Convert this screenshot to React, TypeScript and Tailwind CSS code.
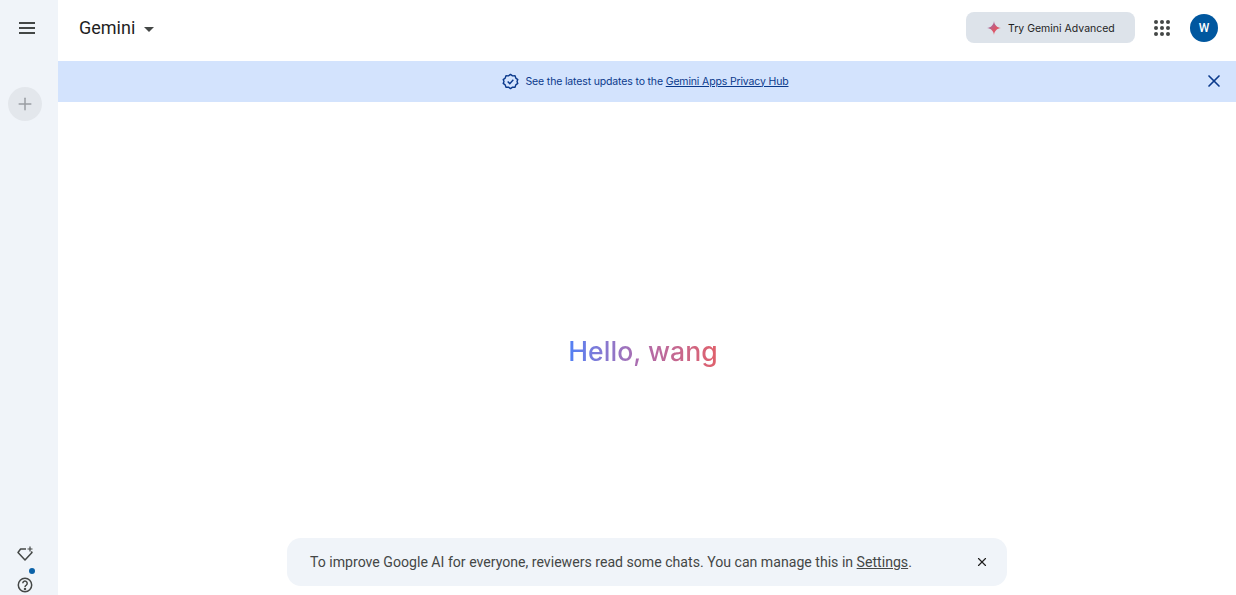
import React from "react";
import { Plus, X } from "lucide-react";

function Dots() {
  const cells = Array.from({ length: 9 });
  return (
    <div className="grid grid-cols-3 gap-[2px] w-[16px]">
      {cells.map((_, i) => (
        <span key={i} className="w-[4px] h-[4px] rounded-full bg-[#444746]" />
      ))}
    </div>
  );
}

export default function App() {
  return (
    <div className="flex w-[1236px] h-[595px] overflow-hidden bg-white font-['Roboto',sans-serif]">
      <aside className="w-[58px] shrink-0 bg-[#f0f4f9] flex flex-col items-center relative">
        <div className="h-[56px] flex items-center justify-center pr-[4px]">
          <svg width="16" height="12" viewBox="0 0 16 12" fill="#444746">
            <rect x="0" y="0" width="16" height="2" />
            <rect x="0" y="5" width="16" height="2" />
            <rect x="0" y="10" width="16" height="2" />
          </svg>
        </div>
        <div className="mt-[31px] mr-[8px] w-[34px] h-[34px] rounded-full bg-[#e3e7ec] flex items-center justify-center text-[#9a9ea3]">
          <Plus size={20} strokeWidth={1.8} />
        </div>
        <div className="mt-auto mb-[2px] mr-[8px] flex flex-col items-center relative">
          <svg width="18" height="18" viewBox="0 0 18 18" fill="none" stroke="#444746" strokeWidth="1.5">
            <path d="M10 4H4.600L2 7.500l7 7.500 7-7.500-.7-1" strokeLinejoin="round" />
            <path d="M14 1.500v5M11.500 4h5" strokeWidth="1.2" />
          </svg>
          <span className="absolute left-[13px] top-[23px] w-[6px] h-[6px] rounded-full bg-[#0b62a8]" />
          <svg width="16" height="16" viewBox="0 0 16 16" fill="none" stroke="#444746" strokeWidth="1.5" className="mt-[14px]">
            <circle cx="8" cy="8" r="6.700" />
            <path d="M5.800 6.300a2.200 2.200 0 1 1 3.500 1.800c-.8.500-1.300 1-1.300 1.900" />
            <circle cx="8" cy="12" r="0.500" fill="#444746" />
          </svg>
        </div>
      </aside>

      <main className="flex-1 flex flex-col relative min-w-0">
        <header className="h-[61px] shrink-0 flex items-center pl-[21px] pr-[18px]">
          <div className="flex items-center gap-[9px] text-[#1f1f1f] pb-[5px]">
            <span className="text-[18px] leading-none">Gemini</span>
            <svg width="10" height="5" viewBox="0 0 10 5" className="mt-[2px]"><path d="M0 0h10L5 5z" fill="#444746" /></svg>
          </div>
          <button className="ml-auto w-[169px] h-[31px] mb-[6px] mr-[-1px] rounded-[8px] bg-[#dde3ea] flex items-center pl-[21px] gap-[7px] text-[#1f1f1f] font-['Inter',sans-serif] text-[10.5px]">
            <svg width="14" height="14" viewBox="0 0 14 14">
              <defs>
                <linearGradient id="s" x1="0" y1="0" x2="1" y2="1">
                  <stop offset="0" stopColor="#7a78c8" />
                  <stop offset="0.55" stopColor="#d9566a" />
                  <stop offset="1" stopColor="#e0616c" />
                </linearGradient>
              </defs>
              <path d="M7 0C7.400 4 10 6.600 14 7 10 7.400 7.400 10 7 14 6.600 10 4 7.400 0 7 4 6.600 6.600 4 7 0Z" fill="url(#s)" />
            </svg>
            <span className="pt-[2px]">Try Gemini Advanced</span>
          </button>
          <div className="ml-[20px] mb-[6px]"><Dots /></div>
          <div className="ml-[20px] mb-[6px] w-[28px] h-[28px] rounded-full bg-[#00579f] text-white text-[12px] font-medium flex items-center justify-center">W</div>
        </header>

        <div className="h-[41px] shrink-0 bg-[#d3e3fd] flex items-center relative text-[#0b3a8c] font-['Inter',sans-serif] text-[10.5px] tracking-[-0.15px]">
          <div className="w-full pr-[4px] flex items-center justify-center gap-[7px]">
            <svg width="17" height="17" viewBox="0 0 24 24" fill="none" stroke="#0b3a8c" strokeWidth="2">
              <path d="M12 2l2.900 2 3.500-.1 1.100 3.300 2.800 2.100L21.200 12l1.100 2.700-2.800 2.100-1.100 3.300-3.500-.1L12 22l-2.900-2-3.500.1-1.100-3.300-2.800-2.100L2.800 12 1.700 9.300l2.800-2.100 1.100-3.300 3.500.1z" strokeLinejoin="round" />
              <path d="M8 12l3 3 5-5.500" />
            </svg>
            <span>See the latest updates to the <span className="underline">Gemini Apps Privacy Hub</span></span>
          </div>
          <X size={20} strokeWidth={2} className="absolute right-[12px] top-[10px] text-[#0b3a8c]" />
        </div>

        <div className="flex-1 flex flex-col items-center relative">
          <h1 className="mt-[230px] mr-[8px] text-[26.600px] leading-[38px] font-medium font-['Inter',sans-serif] bg-gradient-to-r from-[#4f80f5] via-[#b06aaa] to-[#e0606a] bg-clip-text text-transparent">Hello, wang</h1>
          <div className="absolute left-[229px] top-[436px] w-[720px] h-[48px] rounded-[14px] bg-[#f0f4f9] flex items-center pl-[23px] pt-[1px] text-[#444746] text-[14.120px]">
            <span>To improve Google AI for everyone, reviewers read some chats. You can manage this in <span className="underline">Settings</span>.</span>
            <X size={14} strokeWidth={2} className="absolute right-[18px] top-[17px] text-[#1f1f1f]" />
          </div>
        </div>
      </main>
    </div>
  );
}
